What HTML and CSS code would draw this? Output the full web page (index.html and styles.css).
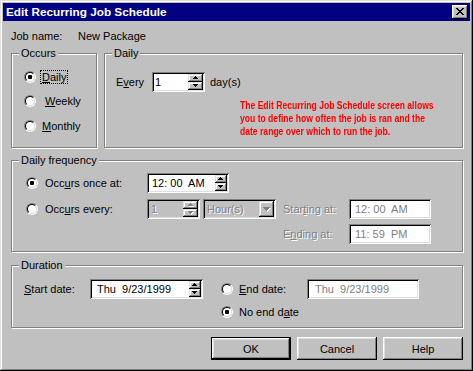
FILE: index.html
```html
<!DOCTYPE html>
<html>
<head>
<meta charset="utf-8">
<title>Edit Recurring Job Schedule</title>
<link rel="stylesheet" href="styles.css">
</head>
<body>
<div class="window">
  <div class="titlebar">
    <span class="title">Edit Recurring Job Schedule</span>
    <span class="close"><svg width="8" height="7" viewBox="0 0 8 7" shape-rendering="crispEdges"><path d="M0 0h2v1H0zM6 0h2v1H6zM1 1h2v1H1zM5 1h2v1H5zM2 2h4v1H2zM3 3h2v1H3zM2 4h4v1H2zM1 5h2v1H1zM5 5h2v1H5zM0 6h2v1H0zM6 6h2v1H6z"/></svg></span>
  </div>
  <div class="content">
    <div class="jobrow"><span class="joblbl">Job name:</span><span>New Package</span></div>

    <div class="toprow">
      <div class="group occurs">
        <span class="cap">Occurs</span>
        <div class="opt"><span class="radio on"></span><span class="olbl focus"><u>D</u>aily</span></div>
        <div class="opt"><span class="radio"></span><span class="olbl sp"><u>W</u>eekly</span></div>
        <div class="opt last"><span class="radio"></span><span class="olbl"><u>M</u>onthly</span></div>
      </div>
      <div class="group daily">
        <span class="cap">Daily</span>
        <div class="everyrow">
          <span class="everylbl">E<u>v</u>ery</span>
          <span class="edit every"><span class="val">1</span>
            <span class="spin">
              <span class="sb"><svg width="5" height="3" viewBox="0 0 5 3" shape-rendering="crispEdges"><path d="M2 0h1v1H2zM1 1h3v1H1zM0 2h5v1H0z"/></svg></span>
              <span class="sb"><svg width="5" height="3" viewBox="0 0 5 3" shape-rendering="crispEdges"><path d="M0 0h5v1H0zM1 1h3v1H1zM2 2h1v1H2z"/></svg></span>
            </span>
          </span>
          <span>day(s)</span>
        </div>
        <p class="note">The Edit Recurring Job Schedule screen allows<br>you to define how often the job is ran and the<br>date range over which to run the job.</p>
      </div>
    </div>

    <div class="group freq">
      <span class="cap">Daily frequency</span>
      <div class="frow">
        <div class="opt fopt"><span class="radio on"></span><span class="olbl">Occ<u>u</u>rs once at:</span></div>
        <span class="edit time"><span class="val">12: 00&nbsp; AM</span>
          <span class="spin narrow">
            <span class="sb"><svg width="5" height="3" viewBox="0 0 5 3" shape-rendering="crispEdges"><path d="M2 0h1v1H2zM1 1h3v1H1zM0 2h5v1H0z"/></svg></span>
            <span class="sb"><svg width="5" height="3" viewBox="0 0 5 3" shape-rendering="crispEdges"><path d="M0 0h5v1H0zM1 1h3v1H1zM2 2h1v1H2z"/></svg></span>
          </span>
        </span>
      </div>
      <div class="frow r2">
        <div class="opt fopt"><span class="radio"></span><span class="olbl">Occ<u>u</u>rs every:</span></div>
        <span class="edit off num"><span class="val dis">1</span>
          <span class="spin">
            <span class="sb"><svg class="darr" width="5" height="3" viewBox="0 0 5 3" shape-rendering="crispEdges"><path d="M2 0h1v1H2zM1 1h3v1H1zM0 2h5v1H0z"/></svg></span>
            <span class="sb"><svg class="darr" width="5" height="3" viewBox="0 0 5 3" shape-rendering="crispEdges"><path d="M0 0h5v1H0zM1 1h3v1H1zM2 2h1v1H2z"/></svg></span>
          </span>
        </span>
        <span class="edit off combo"><span class="val dis">Hour(s)</span>
          <span class="ddbtn"><svg class="darr" width="7" height="4" viewBox="0 0 7 4" shape-rendering="crispEdges"><path d="M0 0h7v1H0zM1 1h5v1H1zM2 2h3v1H2zM3 3h1v1H3z"/></svg></span>
        </span>
        <span class="flbl dis">Star<u>t</u>ing at:</span>
        <span class="edit tbox"><span class="val gray">12: 00&nbsp; AM</span></span>
      </div>
      <div class="frow r3">
        <span class="flbl dis">E<u>n</u>ding at:</span>
        <span class="edit tbox"><span class="val gray">11: 59&nbsp; PM</span></span>
      </div>
    </div>

    <div class="group duration">
      <span class="cap">Duration</span>
      <span><u>S</u>tart date:</span>
      <span class="edit date"><span class="val">Thu&nbsp; 9/23/1999</span>
        <span class="spin narrow">
          <span class="sb"><svg width="5" height="3" viewBox="0 0 5 3" shape-rendering="crispEdges"><path d="M2 0h1v1H2zM1 1h3v1H1zM0 2h5v1H0z"/></svg></span>
          <span class="sb"><svg width="5" height="3" viewBox="0 0 5 3" shape-rendering="crispEdges"><path d="M0 0h5v1H0zM1 1h3v1H1zM2 2h1v1H2z"/></svg></span>
        </span>
      </span>
      <span></span>
      <div class="opt"><span class="radio"></span><span class="olbl"><u>E</u>nd date:</span></div>
      <span class="edit enddate"><span class="val gray">Thu&nbsp; 9/23/1999</span></span>
      <div class="opt noend"><span class="radio on"></span><span class="olbl">No end d<u>a</u>te</span></div>
    </div>

    <div class="buttons">
      <span class="btn def">OK</span>
      <span class="btn">Cancel</span>
      <span class="btn">Help</span>
    </div>
  </div>
</div>
</body>
</html>
```

FILE: styles.css
```css
* { box-sizing: border-box; }
html, body { margin: 0; padding: 0; }
body {
  width: 473px;
  height: 371px;
  overflow: hidden;
  background: #c0c0c0;
  font-family: "Liberation Sans", Arial, sans-serif;
  font-size: 11px;
  color: #000;
}
u { text-decoration: underline; text-underline-offset: 1px; }

.window {
  width: 473px;
  height: 371px;
  padding: 3px;
  background: #c0c0c0;
  box-shadow: inset -1px -1px #000, inset 1px 1px #dfdfdf, inset -2px -2px #808080, inset 2px 2px #fff;
  display: flex;
  flex-direction: column;
}

.titlebar {
  height: 18px;
  background: #000080;
  display: flex;
  align-items: center;
  padding: 0 2px 0 3px;
}
.title {
  flex: 1;
  color: #fff;
  font-weight: bold;
  font-size: 11.75px;
  line-height: 14px;
}
.close {
  width: 16px;
  height: 14px;
  background: #c0c0c0;
  box-shadow: inset -1px -1px #000, inset 1px 1px #fff, inset -2px -2px #808080, inset 2px 2px #dfdfdf;
  display: flex;
  align-items: center;
  justify-content: center;
  padding: 0 1px 1px 0;
}
.close svg { display: block; }

.content {
  display: flex;
  flex-direction: column;
  padding: 9px 7px 0 8px;
}

.jobrow { display: flex; height: 13px; line-height: 13px; }
.joblbl { width: 67px; }

.toprow { display: flex; gap: 7px; margin-top: 10px; }

.group {
  position: relative;
  border: 1px solid #808080;
  box-shadow: inset 1px 1px #fff, 1px 1px #fff;
}
.cap {
  position: absolute;
  top: -7px;
  left: 7px;
  padding: 0 2px;
  background: #c0c0c0;
  line-height: 13px;
}

.occurs {
  width: 87px;
  height: 95px;
  padding: 16px 0 0 12px;
  display: flex;
  flex-direction: column;
  gap: 10px;
}
.occurs .last { margin-top: 1px; }

.opt { display: flex; align-items: center; height: 14px; }
.radio {
  flex: none;
  position: relative;
  width: 12px;
  height: 12px;
  border-radius: 50%;
  border: 1px solid;
  border-color: #808080 #fff #fff #808080;
}
.radio::before {
  content: "";
  position: absolute;
  inset: 0;
  border-radius: 50%;
  border: 1px solid;
  border-color: #000 #dfdfdf #dfdfdf #000;
  background: #fff;
}
.radio.on::after {
  content: "";
  position: absolute;
  left: 3px;
  top: 3px;
  width: 4px;
  height: 4px;
  border-radius: 1px;
  background: #000;
}
.olbl {
  margin-left: 4px;
  padding: 0 1px;
  border: 1px dotted transparent;
  line-height: 12px;
  white-space: nowrap;
}
.olbl.focus { border-color: #000; }
.olbl.sp { margin-left: 7px; }

.daily {
  width: 359px;
  height: 95px;
  padding: 18px 0 0 11px;
}
.everyrow { display: flex; align-items: center; height: 20px; }
.everylbl { width: 36px; }

.edit {
  height: 20px;
  background: #fff;
  box-shadow: inset 1px 1px #808080, inset -1px -1px #fff, inset 2px 2px #000, inset -2px -2px #dfdfdf;
  display: flex;
  align-items: center;
  padding: 2px 2px 2px 3px;
  white-space: nowrap;
}
.edit.off { background: #c0c0c0; }
.val { flex: 1; }
.every { width: 53px; margin-right: 5px; }

.spin {
  flex: none;
  display: flex;
  flex-direction: column;
  width: 15px;
  height: 16px;
}
.spin.narrow { width: 12px; }
.sb {
  flex: 1;
  background: #c0c0c0;
  box-shadow: inset -1px -1px #000, inset 1px 1px #dfdfdf, inset -2px -2px #808080, inset 2px 2px #fff;
  display: flex;
  align-items: center;
  justify-content: center;
  padding: 0 1px 1px 0;
}
.sb svg, .ddbtn svg { display: block; }
.darr { fill: #808080; filter: drop-shadow(1px 1px 0 #fff); }

.note {
  margin: 7px 0 0 124px;
  color: #ff0000;
  font-weight: bold;
  font-size: 11px;
  line-height: 13px;
  white-space: nowrap;
  transform: scaleX(0.78);
  transform-origin: 0 0;
}

.freq {
  margin-top: 12px;
  height: 92px;
  padding: 12px 0 0 14px;
  display: flex;
  flex-direction: column;
}
.frow { display: flex; align-items: center; height: 20px; }
.frow.r2 { margin-top: 6px; }
.frow.r3 { margin-top: 5px; padding-left: 257px; }
.fopt { width: 121px; }
.fopt .olbl { margin-left: 5px; }
.time { width: 82px; padding-left: 5px; }
.num { width: 53px; }
.num .val { padding-left: 1px; }
.combo { width: 73px; margin-left: 3px; }
.combo .val { padding-left: 1px; }
.ddbtn {
  flex: none;
  width: 15px;
  height: 16px;
  background: #c0c0c0;
  box-shadow: inset -1px -1px #000, inset 1px 1px #dfdfdf, inset -2px -2px #808080, inset 2px 2px #fff;
  display: flex;
  align-items: center;
  justify-content: center;
  padding: 0 1px 1px 0;
}
.flbl { width: 66px; white-space: nowrap; }
.r2 .flbl { margin-left: 7px; }
.tbox { width: 82px; padding-left: 6px; }
.dis { color: #808080; text-shadow: 1px 1px 0 #fff; }
.gray { color: #808080; }

.duration {
  margin-top: 13px;
  height: 63px;
  padding: 13px 0 0 12px;
  display: grid;
  grid-template-columns: 66px 113px 18px 86px 112px;
  grid-template-rows: 20px 14px;
  row-gap: 6px;
  align-items: center;
}
.date { padding-left: 7px; }
.enddate { padding-left: 8px; }
.noend { grid-column: 4 / 6; }

.buttons {
  display: flex;
  justify-content: flex-end;
  gap: 6px;
  margin-top: 9px;
}
.btn {
  width: 80px;
  height: 23px;
  display: flex;
  align-items: center;
  justify-content: center;
  background: #c0c0c0;
  box-shadow: inset -1px -1px #000, inset 1px 1px #fff, inset -2px -2px #808080, inset 2px 2px #dfdfdf;
}
.btn.def {
  box-shadow: inset 0 0 0 1px #000, inset -2px -2px #000, inset 2px 2px #fff, inset -3px -3px #808080, inset 3px 3px #dfdfdf;
}
```
